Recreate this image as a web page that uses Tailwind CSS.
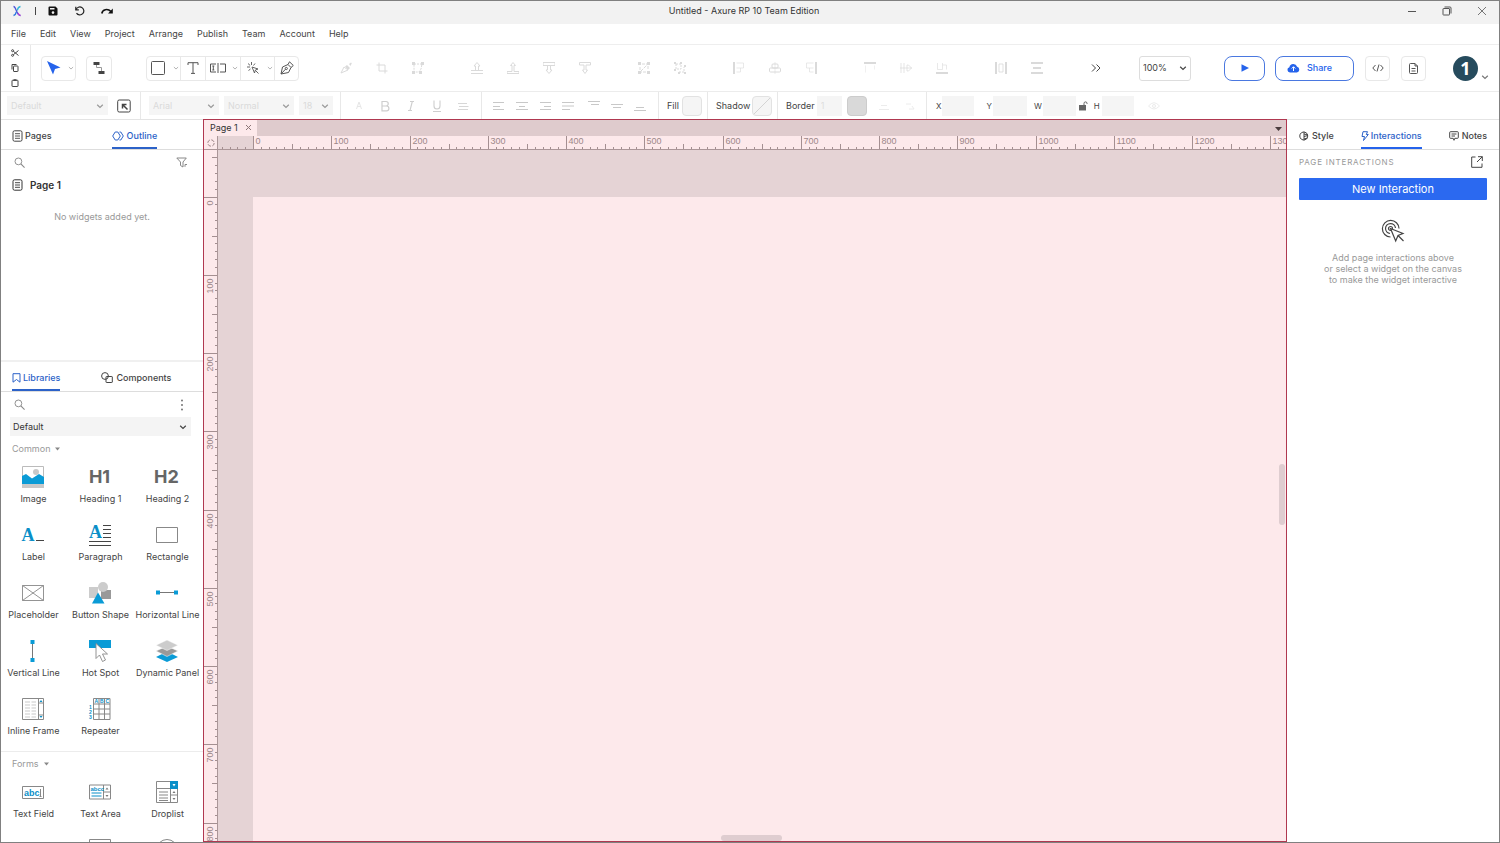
<!DOCTYPE html>
<html lang="en">
<head>
<meta charset="utf-8">
<meta name="viewport" content="width=device-width, initial-scale=1">
<title>Untitled - Axure RP 10 Team Edition</title>
<script src="https://cdn.jsdelivr.net/npm/@tailwindcss/browser@4"></script>
</head>
<body class="h-screen overflow-hidden bg-white font-['Inter','Liberation_Sans',sans-serif] text-[9px] leading-3 text-[#444]">
<svg class="hidden" aria-hidden="true">
  <symbol id="chev" viewBox="0 0 8 8"><path d="M1.2 2.7 4 5.4 6.800 2.700" fill="none" stroke="currentColor" stroke-width="1.2"/></symbol>
  <symbol id="page" viewBox="0 0 11 12"><rect x="1" y=".8" width="9" height="10.400" rx="1.500" fill="none" stroke="currentColor"/><path d="M3 3.700h5M3 6h5M3 8.300h5" stroke="currentColor" stroke-width=".9"/></symbol>
  <symbol id="search" viewBox="0 0 12 12"><circle cx="4.800" cy="4.800" r="3.700" fill="none" stroke="currentColor"/><path d="m7.500 7.500 4 4" stroke="currentColor" stroke-width="1.200"/></symbol>
</svg>
<div class="flex h-full flex-col border border-[#808080]">

  <header class="flex h-[23px] shrink-0 items-center justify-between bg-[#f2f2f2] pb-[3px]">
    <div class="flex flex-1 items-center">
      <svg class="ml-[10px] size-3" viewBox="0 0 12 12" fill="none" stroke-width="1.300"><path d="M2.500 1.500C5.500 1.500 5 10.500 9.500 10.500" stroke="#4a52d8"/><path d="M9.500 1.500C6.500 2 6.500 5 6.300 5.500" stroke="#35b6d8"/><path d="M5.300 7C5 8.500 4.500 10 2.500 10.500" stroke="#2c78e0"/><path d="M7 8c.5 1.500 1.200 2.500 2.500 2.500" stroke="#c040d0"/></svg>
      <span class="ml-3 h-2 w-px bg-[#444]"></span>
      <button class="ml-3 block" aria-label="Save"><svg class="size-[10px]" viewBox="0 0 10 10"><path d="M1.500.5h6L9.500 2.500v6a1 1 0 0 1-1 1h-7a1 1 0 0 1-1-1v-7a1 1 0 0 1 1-1Z" fill="#111"/><path d="M2 2h4.500v1.500H2z" fill="#f2f2f2"/><circle cx="5" cy="6.600" r="1.300" fill="#f2f2f2"/></svg></button>
      <button class="ml-[17px] block" aria-label="Undo"><svg class="size-[10px]" viewBox="0 0 10 10" fill="none" stroke="#222" stroke-width="1.200"><path d="M.8.800v3h3"/><path d="M1 3.800A4 4 0 1 1 1.500 7.200"/></svg></button>
      <button class="ml-4 block" aria-label="Redo"><svg class="h-[10px] w-3" viewBox="0 0 12 10" fill="none" stroke="#111" stroke-width="1.600"><path d="M.8 7.500C1.500 3.500 6.500 2 10 5.500"/><path d="M11.800 2.500v5H7z" fill="#111" stroke="none"/></svg></button>
    </div>
    <h1 class="text-[9px] text-[#333]">Untitled - Axure RP 10 Team Edition</h1>
    <div class="flex flex-1 items-center justify-end gap-[25px] pr-3 text-[#555]">
      <button aria-label="Minimize"><svg class="size-[10px]" viewBox="0 0 10 10"><path d="M1 5.500h8" stroke="currentColor"/></svg></button>
      <button aria-label="Restore"><svg class="size-[10px]" viewBox="0 0 10 10" fill="none" stroke="currentColor"><rect x="1" y="2.500" width="6.500" height="6.500" rx=".5"/><path d="M2.500 1h5.500a1 1 0 0 1 1 1v5.500"/></svg></button>
      <button aria-label="Close"><svg class="size-[10px]" viewBox="0 0 10 10"><path d="m1 1 8 8M9 1 1 9" stroke="currentColor" stroke-width=".8"/></svg></button>
    </div>
  </header>

  <nav class="flex h-[21px] shrink-0 items-center gap-[14px] border-b border-[#eee] pl-[10px]">
    <button>File</button><button>Edit</button><button>View</button><button>Project</button><button>Arrange</button><button>Publish</button><button>Team</button><button>Account</button><button>Help</button>
  </nav>

  <div class="flex h-[47px] shrink-0 items-center border-b border-[#ececec]">
    <div class="flex h-full w-[30px] shrink-0 flex-col items-center justify-around border-r border-[#e8e8e8] pr-[2px]">
      <button aria-label="Cut"><svg class="size-2" viewBox="0 0 8 8" fill="none" stroke="#444"><circle cx="1.600" cy="1.700" r="1"/><circle cx="1.600" cy="6.300" r="1"/><path d="M2.400 2.300 7.500 6.500M2.400 5.700 7.500 1.500"/></svg></button>
      <button aria-label="Copy"><svg class="size-2" viewBox="0 0 8 8" fill="none" stroke="#444"><rect x="2.500" y="2" width="4.500" height="5.500" rx=".5"/><path d="M1 5.500V.5h4.500"/></svg></button>
      <button aria-label="Paste"><svg class="size-2" viewBox="0 0 8 8" fill="none" stroke="#444"><rect x="1" y="1.300" width="6" height="6.200" rx=".5"/><path d="M2.500 1h3" stroke-width="1.500"/></svg></button>
    </div>
    <button class="ml-[10px] flex h-[25px] w-[35px] shrink-0 items-center justify-between rounded border border-[#e8e8e8] pr-px pl-[5px]" aria-label="Select tool"><svg class="size-[14px]" viewBox="0 0 14 14"><path d="M0 0 13.500 6.500 8 8 6 13.500z" fill="#2563eb"/></svg><svg class="size-[6px] text-[#aaa]"><use href="#chev"/></svg></button>
    <button class="ml-[10px] flex h-[25px] w-[26px] shrink-0 items-center justify-center rounded border border-[#e8e8e8]" aria-label="Connector"><svg class="h-[14px] w-3" viewBox="0 0 12 14"><path d="M.5 1h6v3h-6zM5.500 10h6v3h-6z" fill="#444"/><path d="M3.500 4v2.500h5V10" fill="none" stroke="#999"/></svg></button>
    <div class="ml-[34px] flex h-[25px] w-[153px] shrink-0 divide-x divide-[#e8e8e8] rounded border border-[#e8e8e8] text-[#555]">
      <button class="flex w-[34px] items-center justify-between pr-px pl-1" aria-label="Rectangle tool"><svg class="size-[14px]" viewBox="0 0 14 14"><rect x=".5" y=".5" width="13" height="13" rx="1" fill="none" stroke="currentColor"/></svg><svg class="size-[6px] text-[#aaa]"><use href="#chev"/></svg></button>
      <button class="flex w-[25px] items-center justify-center" aria-label="Text tool"><svg class="size-3" viewBox="0 0 12 12" fill="none" stroke="currentColor"><path d="M1 3V.700h10V3M6 .700v10.800M4 11.400h4"/></svg></button>
      <button class="flex w-[35px] items-center justify-between pr-[2px] pl-1" aria-label="Form tool"><svg class="h-[10px] w-4" viewBox="0 0 16 10" fill="none" stroke="currentColor"><path d="M6 1H.500v8H6M10 1h5.500v8H10M8 0v10M3.300 3v4M2.300 3h2M2.300 7h2"/></svg><svg class="size-[6px] text-[#aaa]"><use href="#chev"/></svg></button>
      <button class="flex w-[34px] items-center justify-between pr-px pl-[5px]" aria-label="Hot spot tool"><svg class="size-[14px]" viewBox="0 0 14 14" fill="none" stroke="currentColor" stroke-width=".9"><path d="m6 6 6 2-2.600 1L8.500 12zM9.500 9.500l3 3M5.500 1v3M1 6h3M2 2.500 4.200 4.500M9 2.500 7.500 4.500M2.500 9.500 4.500 8"/></svg><svg class="size-[6px] text-[#aaa]"><use href="#chev"/></svg></button>
      <button class="flex flex-1 items-center justify-center" aria-label="Pen tool"><svg class="size-[14px]" viewBox="0 0 14 14" fill="none" stroke="currentColor"><path d="M1 13 2.500 6 8 3.500 11 6.500 8.500 11.500zM8 3.500 9.500.8l3.800 3.700L11 6.500M1 13l4.500-4.800"/><circle cx="6.300" cy="7.500" r="1.100"/></svg></button>
    </div>

    <div class="ml-7 flex min-w-0 flex-1 items-center gap-[23px] overflow-hidden pl-px text-[#dadada] [&_button]:flex [&_button]:w-9 [&_button]:justify-center [&_svg]:size-3">
      <div class="flex">
        <button disabled aria-label="Format painter"><svg viewBox="0 0 12 12"><path d="M1 11 4 5l4 3z" fill="none" stroke="currentColor"/><path d="M5 4.500 7 3l3 3-2 2zM9 2l2-1.500.8.800L10.500 4z" fill="currentColor"/></svg></button>
        <button disabled aria-label="Crop"><svg viewBox="0 0 12 12" fill="none" stroke="currentColor"><path d="M3 .5V9h8.500M.5 3H9v8.500"/></svg></button>
        <button disabled aria-label="Transform"><svg viewBox="0 0 12 12" fill="none" stroke="currentColor"><path d="M2 2h8L9 7l-2 3H2z" stroke-dasharray="2 1"/><path d="M0 1.500h3M0 10.500h3M9 1.500h3M7 10.500h3" stroke-width="3"/></svg></button>
      </div>
      <div class="flex">
        <button disabled aria-label="Bring to front"><svg viewBox="0 0 12 12" fill="none" stroke="currentColor"><path d="M0 11.500h12M0 8.500h12M4.500 8.500V4H3l3-3.500L9 4H7.500v4.500"/></svg></button>
        <button disabled aria-label="Bring forward"><svg viewBox="0 0 12 12" fill="none" stroke="currentColor"><path d="M0 11.500h12M0 11.500V9.500h5V3.500H3.500L6 .500l2.500 3H7v6h5v2"/></svg></button>
        <button disabled aria-label="Send backward"><svg viewBox="0 0 12 12" fill="none" stroke="currentColor"><path d="M0 .5h12M0 3.500h12M4.500 3.500V8H3l3 3.500L9 8H7.500V3.500M0 .5v3M12 .5v3"/></svg></button>
        <button disabled aria-label="Send to back"><svg viewBox="0 0 12 12" fill="none" stroke="currentColor"><path d="M.5.500h11V3H7v5h1.500L6 11.500 3.500 8H5V3H.5z"/></svg></button>
      </div>
      <div class="flex">
        <button disabled aria-label="Group"><svg viewBox="0 0 12 12" fill="none" stroke="currentColor"><path d="M2 5v5h6M4 2h6v6M3 9l6-6" stroke-dasharray="3 1"/><path d="M0 1.500h3M0 10.500h3M9 1.500h3M9 10.500h3" stroke-width="3"/></svg></button>
        <button disabled aria-label="Ungroup"><svg viewBox="0 0 12 12" fill="none" stroke="currentColor"><path d="M2 2h5v5H2zM5 10h5V5" stroke-dasharray="2 1"/><path d="M0 1h2M6 1h2M0 8h2M10 4h2M4 11h2M10 11h2" stroke-width="2"/></svg></button>
      </div>
      <div class="flex">
        <button disabled aria-label="Align left"><svg viewBox="0 0 12 12" fill="none" stroke="currentColor"><path d="M1 0v12" stroke-width="2"/><path d="M3.500 1h7v5h-7M3.500 10h4V6" opacity=".6"/></svg></button>
        <button disabled aria-label="Align center"><svg viewBox="0 0 12 12" fill="none" stroke="currentColor"><rect x="3" y="2" width="6" height="4" rx="1"/><rect x=".5" y="6" width="11" height="4" rx="1"/><path d="M6 0v12" opacity=".5"/></svg></button>
        <button disabled aria-label="Align right"><svg viewBox="0 0 12 12" fill="none" stroke="currentColor"><path d="M11 0v12" stroke-width="2"/><path d="M8.500 1h-7v5h7M8.500 10h-4V6" opacity=".6"/></svg></button>
      </div>
      <div class="flex">
        <button disabled aria-label="Align top"><svg viewBox="0 0 12 12" fill="none" stroke="currentColor"><path d="M0 1h12" stroke-width="2"/><path d="M1.500 3.500v7M10.500 3.500v4" opacity=".4"/></svg></button>
        <button disabled aria-label="Align middle"><svg viewBox="0 0 12 12" fill="none" stroke="currentColor"><path d="M1 1v10M4 1v10" opacity=".7"/><path d="M7 3h1.500l3 3-3 3H7zM0 6h12" opacity=".7"/></svg></button>
        <button disabled aria-label="Align bottom"><svg viewBox="0 0 12 12" fill="none" stroke="currentColor"><path d="M0 11h12" stroke-width="2"/><path d="M1.500 1v6.500h5V1M6.500 3h4v4.500" opacity=".6"/></svg></button>
      </div>
      <div class="flex">
        <button disabled aria-label="Distribute horizontally"><svg viewBox="0 0 12 12" fill="none" stroke="currentColor"><path d="M1 0v12M11 0v12" stroke-width="2"/><path d="M4 2h4v8H4z" opacity=".8"/></svg></button>
        <button disabled aria-label="Distribute vertically"><svg viewBox="0 0 12 12" fill="none" stroke="currentColor"><path d="M0 1h12M0 11h12" stroke-width="2"/><path d="M2 6h8" stroke-width="2"/></svg></button>
      </div>
      <button class="text-[#444]" aria-label="More"><svg viewBox="0 0 12 12" fill="none" stroke="currentColor" stroke-width="1"><path d="m2 2.500 3.500 3.500L2 9.500M6.500 2.500 10 6 6.500 9.500"/></svg></button>
    </div>

    <div class="relative h-[25px] w-[52px] shrink-0">
      <select aria-label="Zoom" class="h-full w-full appearance-none rounded-[3px] border border-[#ddd] pl-[3px] text-[9px]"><option>100%</option></select>
      <svg class="pointer-events-none absolute top-2 right-1 size-2"><use href="#chev"/></svg>
    </div>
    <button class="ml-[33px] flex h-[25px] w-[41px] shrink-0 items-center justify-center rounded-lg border border-[#4a78e0]" aria-label="Preview"><svg class="size-2" viewBox="0 0 8 8"><path d="M.5.200 8 4 .5 7.800z" fill="#2563eb"/></svg></button>
    <button class="ml-[10px] flex h-[25px] w-[79px] shrink-0 items-center rounded-lg border border-[#4a78e0] pl-[11px] text-[#2563eb]"><svg class="h-[10px] w-[13px]" viewBox="0 0 13 10"><path d="M3 9.500a2.700 2.700 0 0 1-.6-5.300 4 4 0 0 1 7.700-.5A3 3 0 0 1 10 9.500z" fill="#2563eb"/><path d="M6.500 8V4M4.700 5.500 6.500 3.700 8.300 5.500" fill="none" stroke="#fff"/></svg><span class="ml-[7px] text-[9px] font-medium">Share</span></button>
    <button class="ml-[11px] flex size-[25px] shrink-0 items-center justify-center rounded border border-[#e8e8e8]" aria-label="Inspect"><svg class="h-2 w-3" viewBox="0 0 12 8" fill="none" stroke="#555"><path d="M3.500 1 .8 4l2.700 3M8.500 1l2.700 3-2.700 3M7 .500 5 7.500"/></svg></button>
    <button class="ml-[11px] flex size-[25px] shrink-0 items-center justify-center rounded border border-[#e8e8e8]" aria-label="Documents"><svg class="h-[11px] w-[9px]" viewBox="0 0 9 11" fill="none" stroke="#555"><path d="M1.500.5H6L8.500 3v6.500a1 1 0 0 1-1 1h-6a1 1 0 0 1-1-1v-8a1 1 0 0 1 1-1ZM6 .500V3h2.500M2.500 5.500h4M2.500 8h4"/></svg></button>
    <button class="ml-[27px] flex shrink-0 items-end gap-[3px] pr-[10px]" aria-label="Account menu"><span class="flex size-[25px] items-center justify-center rounded-full bg-[#264b5d] font-['Open_Sans','Noto_Sans',sans-serif] text-[18px] font-bold text-white">1</span><svg class="size-2 text-[#777]"><use href="#chev"/></svg></button>
  </div>

  <div class="flex h-7 shrink-0 items-center overflow-hidden border-b border-[#e4e4e4] text-[#444] [&>div]:shrink-0">
    <div class="flex h-full w-[140px] items-center border-r border-[#e8e8e8] pl-[6px]">
      <div class="relative h-[19px] w-[101px]"><select disabled aria-label="Widget style" class="h-full w-full appearance-none bg-[#f5f5f5] pl-1 text-[9px] text-[#dadada] opacity-100"><option>Default</option></select><svg class="absolute top-[6px] right-1 size-2 text-[#999]"><use href="#chev"/></svg></div>
      <button class="ml-[9px]" aria-label="Manage styles"><svg class="size-[14px]" viewBox="0 0 14 14" fill="none" stroke="#444"><rect x=".7" y="1" width="12.500" height="12" rx="1.500"/><path d="M5.500 9.500v-4h4M5.500 5.500l5 5" stroke-width="1.500"/></svg></button>
    </div>
    <div class="flex h-full w-[200px] items-center gap-[5px] border-r border-[#e8e8e8] pl-2">
      <div class="relative h-[19px] w-[70px]"><select disabled aria-label="Font" class="h-full w-full appearance-none bg-[#f5f5f5] pl-1 text-[9px] text-[#dadada] opacity-100"><option>Arial</option></select><svg class="absolute top-[6px] right-1 size-2 text-[#999]"><use href="#chev"/></svg></div>
      <div class="relative h-[19px] w-[70px]"><select disabled aria-label="Font weight" class="h-full w-full appearance-none bg-[#f5f5f5] pl-1 text-[9px] text-[#dadada] opacity-100"><option>Normal</option></select><svg class="absolute top-[6px] right-1 size-2 text-[#999]"><use href="#chev"/></svg></div>
      <div class="relative h-[19px] w-[34px]"><select disabled aria-label="Font size" class="h-full w-full appearance-none bg-[#f5f5f5] pl-1 text-[9px] text-[#dadada] opacity-100"><option>18</option></select><svg class="absolute top-[6px] right-1 size-2 text-[#999]"><use href="#chev"/></svg></div>
    </div>
    <div class="flex h-full w-[141px] items-center justify-center border-r border-[#e8e8e8] text-[#cecece] [&>button]:flex [&>button]:w-[26px] [&>button]:justify-center [&_svg]:size-3">
      <button disabled aria-label="Text color"><svg viewBox="0 0 12 12" fill="none" stroke="currentColor" opacity=".5"><path d="M3.500 9 6 2l2.500 7M4.300 6.500h3.500"/></svg></button>
      <button disabled aria-label="Bold"><svg viewBox="0 0 12 12" fill="none" stroke="currentColor" stroke-width="1.200"><path d="M3 1.500h4a2.200 2.200 0 0 1 0 4.500H3zM3 6h4.500a2.300 2.300 0 0 1 0 4.800H3z"/></svg></button>
      <button disabled aria-label="Italic"><svg viewBox="0 0 12 12" fill="none" stroke="currentColor" stroke-width="1.100"><path d="M5 1.500h4M3 10.500h4M7.300 1.500 5 10.500"/></svg></button>
      <button disabled aria-label="Underline"><svg viewBox="0 0 12 12" fill="none" stroke="currentColor" stroke-width="1.100"><path d="M3 .500v5.500a3 3 0 0 0 6 0V.500M2 11.500h8"/></svg></button>
      <button disabled aria-label="List"><svg viewBox="0 0 12 12" stroke="currentColor"><path d="M1 3.500H10M2 6.500h9.500M1 9.500H11" opacity=".8"/></svg></button>
    </div>
    <div class="flex h-full w-[177px] items-center border-r border-[#e8e8e8] pl-[5px] text-[#c8c8c8] [&>button]:flex [&>button]:w-[23px] [&>button]:justify-center [&_svg]:size-3">
      <button disabled aria-label="Text left"><svg viewBox="0 0 12 12" stroke="currentColor"><path d="M0 2.500h11M0 6.500h7M0 9.500h11"/></svg></button>
      <button disabled aria-label="Text center"><svg viewBox="0 0 12 12" stroke="currentColor"><path d="M0 2.500h12M3 6.500h6M0 9.500h12"/></svg></button>
      <button disabled aria-label="Text right"><svg viewBox="0 0 12 12" stroke="currentColor"><path d="M1 2.500h11M5 6.500h7M1 9.500h11"/></svg></button>
      <button disabled aria-label="Justify"><svg viewBox="0 0 12 12" stroke="currentColor"><path d="M0 2.500h12M0 6h12M0 9.500h8"/></svg></button>
      <button disabled class="ml-[3px]" aria-label="Top"><svg viewBox="0 0 12 12" stroke="currentColor"><path d="M0 1.500h12M3 4.500h8"/></svg></button>
      <button disabled aria-label="Middle"><svg viewBox="0 0 12 12" stroke="currentColor"><path d="M0 4.500h12M2 7.500h8"/></svg></button>
      <button disabled aria-label="Bottom"><svg viewBox="0 0 12 12" stroke="currentColor"><path d="M2 7.500h8M0 10.500h12"/></svg></button>
    </div>
    <div class="flex h-full w-[49px] items-center gap-[3px] border-r border-[#e8e8e8] pl-2"><span>Fill</span><button class="size-5 rounded border border-[#e2e2e2] bg-[#f5f5f5]" aria-label="Fill color"></button></div>
    <div class="flex h-full w-[70px] items-center gap-[2px] border-r border-[#e8e8e8] pl-2"><span>Shadow</span><button class="size-5 rounded border border-[#e2e2e2] bg-[#f5f5f5]" aria-label="Shadow"><svg viewBox="0 0 18 18"><path d="M1 17 17 1" stroke="#d4d4d4"/></svg></button></div>
    <div class="flex h-full w-[149px] items-center border-r border-[#e8e8e8] pl-2">
      <label for="bw">Border</label><input id="bw" disabled value="1" class="ml-[2px] h-5 w-[25px] bg-[#f5f5f5] pl-1 text-[9px] text-[#ddd]">
      <button class="ml-[5px] size-5 rounded border border-[#ccc] bg-[#d9d9d9]" aria-label="Border color"></button>
      <button disabled class="ml-[12px]" aria-label="Line style"><svg class="size-[10px]" viewBox="0 0 10 10" stroke="#ececec"><path d="M2 4.500h6M0 8.500h10"/></svg></button>
      <button disabled class="ml-4" aria-label="Arrow style"><svg class="size-[10px]" viewBox="0 0 10 10" fill="none" stroke="#ececec"><path d="M1 3h5M4 8h5M7 5l2 3"/></svg></button>
    </div>
    <div class="flex h-full items-center pl-[9px] text-[8px] [&>input]:h-5 [&>input]:bg-[#f5f5f5]">
      <label for="px">X</label><input id="px" disabled class="ml-px w-8">
      <label for="py" class="ml-3">Y</label><input id="py" disabled class="ml-px w-[34px]">
      <label for="pw" class="ml-[7px]">W</label><input id="pw" disabled class="ml-px w-[33px]">
      <button class="ml-[2px]" aria-label="Lock ratio"><svg class="size-[10px]" viewBox="0 0 10 10"><path d="M1 4h7v5.500H1z" fill="#666"/><path d="M6 4V2.500A1.500 1.500 0 0 1 9 2.300V3" fill="none" stroke="#666"/></svg></button>
      <label for="ph" class="ml-[6px]">H</label><input id="ph" disabled class="ml-[2px] w-8">
      <button disabled class="ml-[14px]" aria-label="Visibility"><svg class="h-2 w-3" viewBox="0 0 12 8" fill="none" stroke="#ececec"><path d="M.5 4Q6-2.500 11.500 4 6 10 .5 4Z"/><circle cx="6" cy="4" r="1.500"/></svg></button>
    </div>
  </div>

  <main class="flex min-h-0 flex-1">
    <aside class="flex w-[202px] shrink-0 flex-col">
      <section class="flex h-[242px] shrink-0 flex-col border-b-2 border-[#f0f0f0]">
        <div class="flex h-[30px] shrink-0 gap-[60px] border-b border-[#ddd] pl-[11px] text-[9px] font-medium">
          <button class="flex items-center gap-[2px] pt-[2px]"><svg class="h-3 w-[11px]"><use href="#page"/></svg>Pages</button>
          <button class="flex items-center gap-[3px] border-b-2 border-[#2c62c8] pt-1 text-[#2c62c8]"><svg class="h-[10px] w-3" viewBox="0 0 12 10" fill="none" stroke="currentColor"><path d="M3.200 1h2.600L8.300 5 5.800 9H3.200L.7 5z"/><path d="M7.500 1h1.300l2.500 4-2.500 4H7.500"/></svg>Outline</button>
        </div>
        <div class="flex h-[25px] items-center justify-between pr-[15px] pl-[13px] text-[#888]">
          <button aria-label="Search outline"><svg class="size-[11px]"><use href="#search"/></svg></button>
          <button aria-label="Filter"><svg class="h-[11px] w-3" viewBox="0 0 12 11" fill="none" stroke="currentColor"><path d="M.8 1h9.500L7 5v5L4.500 8.500V5zM9 9.800V7.500h2"/></svg></button>
        </div>
        <button class="flex h-5 items-center gap-[7px] pl-[11px] text-[10px] font-semibold text-[#333]"><svg class="h-3 w-[11px]"><use href="#page"/></svg>Page 1</button>
        <p class="mt-4 text-center text-[#999]">No widgets added yet.</p>
      </section>
      <section class="flex min-h-0 flex-1 flex-col overflow-hidden">
        <div class="flex h-[30px] shrink-0 gap-[41px] border-b border-[#ddd] pl-[11px] text-[9px] font-medium">
          <button class="flex items-center gap-[2px] border-b-2 border-[#2c62c8] pt-1 text-[#2c62c8]"><svg class="h-[10px] w-[9px]" viewBox="0 0 9 10" fill="none" stroke="currentColor"><path d="M1 .700h7v8.500L4.500 6.500 1 9.200z"/></svg>Libraries</button>
          <button class="flex items-center gap-[3px] pt-[2px]"><svg class="h-[11px] w-3" viewBox="0 0 12 11" fill="none" stroke="currentColor"><circle cx="4" cy="4" r="3.400"/><rect x="5" y="4.500" width="6.300" height="6" rx=".5"/></svg>Components</button>
        </div>
        <div class="flex h-[25px] shrink-0 items-center justify-between pr-[19px] pl-[13px] text-[#888]">
          <button aria-label="Search libraries"><svg class="size-[11px]"><use href="#search"/></svg></button>
          <button aria-label="Library options"><svg class="h-3 w-1" viewBox="0 0 4 12" fill="#666"><circle cx="2" cy="1.500" r=".9"/><circle cx="2" cy="6" r=".9"/><circle cx="2" cy="10.500" r=".9"/></svg></button>
        </div>
        <div class="relative mr-3 ml-[9px] h-[19px] shrink-0">
          <select aria-label="Library" class="h-full w-full appearance-none bg-[#f4f4f4] pl-[3px] text-[9px] text-[#333]"><option>Default</option></select>
          <svg class="pointer-events-none absolute top-[6px] right-1 size-2"><use href="#chev"/></svg>
        </div>
        <button class="flex h-[25px] shrink-0 items-center gap-[5px] pl-[11px] text-[#999]">Common<svg class="h-1 w-[5px]" viewBox="0 0 5 4"><path d="M0 .500h5L2.500 3.500z" fill="#888"/></svg></button>
        <div class="-ml-px grid w-[201px] shrink-0 grid-cols-3 [&>button]:flex [&>button]:h-[58px] [&>button]:flex-col [&>button]:items-center [&>button]:whitespace-nowrap [&_i]:flex [&_i]:h-8 [&_i]:items-center [&_i]:pr-[2px] [&_i]:not-italic [&_svg]:size-[22px] [&_svg]:overflow-visible">
          <button><i><svg viewBox="0 0 22 22"><path d="M.5.500h21v21H.5z" fill="#fff" stroke="#bbb"/><circle cx="14" cy="6" r="3" fill="#c8c8c8"/><path d="M0 10l4-2 6 4.500 7-4.500 5 3v7H0z" fill="#0a9bd6"/><path d="M0 18h22v4H0z" fill="#c8c8c8"/></svg></i>Image</button>
          <button><i class="text-[18px] font-bold text-[#666]">H1</i>Heading 1</button>
          <button><i class="text-[18px] font-bold text-[#666]">H2</i>Heading 2</button>
          <button><i class="gap-px font-['Liberation_Serif',serif] text-[18px] font-bold text-[#0a8fc8]">A<b class="mt-[10px] h-px w-2 bg-[#444]"></b></i>Label</button>
          <button><i><svg viewBox="0 0 22 22"><text x="0" y="14" font-family="Liberation Serif, serif" font-weight="700" font-size="18" fill="#0a8fc8">A</text><path d="M14 1.500h8M14 5.500h8M14 9.500h8M14 13.500h8M0 17.500h22M0 21.500h22" stroke="#444" stroke-width="1.200"/></svg></i>Paragraph</button>
          <button><i><svg viewBox="0 0 22 22"><path d="M.5 3.500h21v15H.5z" fill="none" stroke="#888"/></svg></i>Rectangle</button>
          <button><i><svg viewBox="0 0 22 22"><path d="M.5 3.500h21v15H.5zl21 15M.5 18.500l21-15" fill="none" stroke="#888" stroke-width=".9"/></svg></i>Placeholder</button>
          <button><i><svg viewBox="0 0 22 22"><path d="M0 5h9v11H0z" fill="#ccc"/><path d="M12 8h10v9H12z" fill="#999"/><circle cx="14" cy="5" r="5" fill="#ccc"/><path d="M9 10.500 15.500 21.500H3z" fill="#0a9bd6"/></svg></i>Button Shape</button>
          <button><i><svg viewBox="0 0 22 22"><path d="M2 10.500h18" stroke="#777"/><path d="M0 8.500h4v4H0zM18 8.500h4v4h-4z" fill="#0a9bd6"/></svg></i>Horizontal Line</button>
          <button><i><svg viewBox="0 0 22 22"><path d="M10.500 2v18" stroke="#777"/><path d="M8.500 0h4v4h-4zM8.500 18h4v4h-4z" fill="#0a9bd6"/></svg></i>Vertical Line</button>
          <button><i><svg viewBox="0 0 22 22"><path d="M0 0h22v8H0z" fill="#0a9bd6"/><path d="M7 3.500v15l3.500-3.500 3 6.500 3-1.500-3-6h5z" fill="#fff" stroke="#888" stroke-width=".9"/></svg></i>Hot Spot</button>
          <button><i><svg viewBox="0 0 22 22"><path d="M11 11.500 22 17l-11 5-11-5z" fill="#0a9bd6"/><path d="M11 6 22 11l-11 5.500L0 11z" fill="#999" stroke="#fff" stroke-width=".5"/><path d="M11 0 22 5.200 11 10.500 0 5.200z" fill="#ccc" stroke="#fff" stroke-width=".5"/></svg></i>Dynamic Panel</button>
          <button><i><svg viewBox="0 0 22 22" fill="none" stroke="#888"><path d="M.5.500h21v21H.5zM16.500.500v21M16.500 5h5M16.500 17h5"/><path d="M3 4h5M9.500 4H14M3 7h5M9.500 7H14M3 10h5M9.500 10H14M3 13h5M9.500 13H14M3 16h5M9.500 16H14M3 19h5M9.500 19H14" stroke="#bbb" stroke-width=".8"/><path d="M17.500 4 19 2l1.500 2zM17.500 18l1.500 2 1.500-2z" fill="#0a8fc8" stroke="none"/></svg></i>Inline Frame</button>
          <button><i><svg viewBox="0 0 22 22" fill="none" stroke="#888"><path d="M4.500.500h16.500v21H4.500zM4.500 6h16.500M4.500 11h16.500M4.500 16h16.500M10 .500v21M15.500.500v21"/><g font-family="Liberation Sans" font-weight="700" font-size="5" fill="#0a8fc8" stroke="none"><text x="5.500" y="5">A</text><text x="11" y="5">B</text><text x="16.500" y="5">C</text><text x="0" y="11">1</text><text x="0" y="16">2</text><text x="0" y="21">3</text></g></svg></i>Repeater</button>
        </div>
        <button class="flex h-[25px] shrink-0 items-center gap-[5px] border-t border-[#ececec] pl-[11px] text-[#999]">Forms<svg class="h-1 w-[5px]" viewBox="0 0 5 4"><path d="M0 .500h5L2.500 3.500z" fill="#888"/></svg></button>
        <div class="-ml-px grid w-[201px] shrink-0 grid-cols-3 [&>button]:flex [&>button]:h-[58px] [&>button]:flex-col [&>button]:items-center [&>button]:whitespace-nowrap [&_i]:flex [&_i]:h-8 [&_i]:items-center [&_i]:pr-[2px] [&_i]:not-italic [&_svg]:size-[22px] [&_svg]:overflow-visible">
          <button><i><svg viewBox="0 0 22 22"><path d="M.5 5.500h21v12H.5zM18.500 8v7.500M17.500 15.500h2" fill="none" stroke="#888"/><text x="2" y="15" font-family="Liberation Sans" font-weight="700" font-size="9" fill="#0a8fc8">abc</text></svg></i>Text Field</button>
          <button><i><svg viewBox="0 0 22 22"><path d="M.5 4h21v14H.5zM14.500 4v14M14.500 11h7" fill="none" stroke="#888"/><path d="M16.500 8.500 18 6.500l1.500 2zM16.500 14l1.500 2 1.500-2z" fill="#777"/><text x="1.500" y="9.500" font-family="Liberation Sans" font-weight="700" font-size="6" fill="#0a8fc8">abcc</text><path d="M2.500 12h10M2.500 15h10" stroke="#0a8fc8"/></svg></i>Text Area</button>
          <button><i><svg viewBox="0 0 22 22"><path d="M.5.500h21v7H.5zM.5 7.500h21v14H.5zM14.500.500v21M14.500 14h7M3 11h9M3 14h9M3 17h9M3 19.500h9" fill="none" stroke="#888"/><path d="M14 0h8v8h-8z" fill="#0a8fc8"/><path d="M16.500 3 18 5.500 19.500 3z" fill="#fff"/><path d="M16.500 12 18 10l1.500 2zM16.500 17l1.500 2 1.500-2z" fill="#777"/></svg></i>Droplist</button>
          <button aria-label="List Box"><i><svg viewBox="0 0 22 22"><path d="M.5 6h21v10H.5z" fill="none" stroke="#888"/></svg></i></button>
          <button aria-label="Checkbox"><i><svg viewBox="0 0 22 22"><path d="M.5.500h21v21H.5z" fill="none" stroke="#888"/></svg></i></button>
          <button aria-label="Radio Button"><i><svg viewBox="0 0 22 22"><circle cx="11" cy="11" r="10.500" fill="none" stroke="#888"/></svg></i></button>
        </div>
      </section>
    </aside>

    <section class="-mt-px flex min-w-0 flex-1 flex-col border border-[#b03850] bg-[#fde9eb]" aria-label="Canvas">
      <div class="flex h-4 shrink-0 items-center justify-between bg-[#dfcbcd] pr-1">
        <button class="flex h-full w-[53px] items-center justify-between bg-[#fde9eb] pr-[6px] pb-px pl-[6px] text-[#333]">Page 1<svg class="size-[5px]" viewBox="0 0 5 5"><path d="m0 0 5 5M5 0 0 5" stroke="#8d7779"/></svg></button>
        <button class="pt-px" aria-label="Page list"><svg class="h-1 w-[7px]" viewBox="0 0 7 4"><path d="M0 0h7L3.500 4z" fill="#4a3c3e"/></svg></button>
      </div>
      <div class="flex h-[14px] shrink-0 border-b border-[#ab9698]">
        <div class="flex w-[14px] shrink-0 items-center justify-center border-r border-[#ab9698]"><svg class="size-2" viewBox="0 0 8 8" fill="none" stroke="#9c8587"><circle cx="4" cy="4" r="3.200" stroke-dasharray="3.500 1.500"/></svg></div>
        <div class="min-w-0 flex-1 bg-linear-to-r from-[#e5d3d5] from-[36px] to-[#fde9eb] to-[36px]"><svg id="rx" class="block h-[13px] w-full" font-family="Liberation Sans, sans-serif" font-size="9" fill="#9c8789"></svg></div>
      </div>
      <div class="flex min-h-0 flex-1">
        <div class="w-[14px] shrink-0 border-r border-[#ab9698]"><svg id="ry" class="block h-full w-[13px]" font-family="Liberation Sans, sans-serif" font-size="9" fill="#9c8789"></svg></div>
        <div class="relative flex min-w-0 flex-1 bg-[#e5d3d5] pt-[47px] pl-[35px]">
          <div class="flex-1 bg-[#fde9eb]"></div>
          <div class="absolute right-px bottom-[316px] h-[61px] w-[6px] rounded-sm bg-[#dfcdd0]"></div>
          <div class="absolute bottom-0 left-[503px] h-[6px] w-[61px] rounded-sm bg-[#dfcdd0]"></div>
        </div>
      </div>
    </section>

    <aside class="flex w-[212px] shrink-0 flex-col">
      <div class="flex h-[30px] shrink-0 justify-between border-b border-[#ddd] pr-3 pl-3 text-[9px] font-medium">
        <button class="flex items-center gap-[3px] pt-[2px]"><svg class="size-[10px]" viewBox="0 0 10 10" fill="none" stroke="currentColor"><path d="M6 1.200a4 4 0 1 0 0 7.600M5 .800v8.500M5 3l4 1M5 5.500l4-1M5 8l3.500-1M6 1.200a4 4 0 0 1 0 7.600"/></svg>Style</button>
        <button class="flex items-center gap-[2px] border-b-2 border-[#2563eb] pt-1 text-[#2c62c8]"><svg class="h-[10px] w-2" viewBox="0 0 8 10" fill="none" stroke="currentColor"><path d="M2 .700h4.500L5.300 3.500h2L2.500 9.500 3.500 5.500H1z"/></svg>Interactions</button>
        <button class="flex items-center gap-[3px] pt-[2px]"><svg class="size-[10px]" viewBox="0 0 10 10" fill="none" stroke="currentColor"><path d="M1.500.700h7a.8.800 0 0 1 .8.800v5a.8.800 0 0 1-.8.800H5.800L5 9.300 4.200 7.300H1.500a.8.800 0 0 1-.8-.8v-5a.8.800 0 0 1 .8-.8ZM2.500 3h5M2.500 5h3.500"/></svg>Notes</button>
      </div>
      <div class="flex h-6 shrink-0 items-center justify-between pr-4 pl-3">
        <h2 class="text-[8px] tracking-widest text-[#999]">PAGE INTERACTIONS</h2>
        <button aria-label="Open in window"><svg class="size-3" viewBox="0 0 12 12" fill="none" stroke="#444"><path d="M4.500 1H.700v10.300H11V7.500M7 .700h4.300V5M11.300.700 6 6"/></svg></button>
      </div>
      <button class="mx-3 mt-1 h-[22px] shrink-0 rounded-[1px] bg-[#2b69f0] text-[11px] text-white">New Interaction</button>
      <svg class="mt-[19px] h-6 w-6 shrink-0 self-center" viewBox="0 0 24 24" fill="none" stroke="#444" stroke-width="1.200"><path d="M9.500 18A8.300 8.300 0 1 1 18 9.500"/><path d="M9 14.500A5 5 0 1 1 14.500 9"/><circle cx="9.500" cy="9.500" r="2"/><path d="m9.500 9.500 12.500 5-5 2-2.300 5.500zM17.500 17l5 5" fill="#fff"/></svg>
      <p class="mt-[9px] text-center text-[9px] leading-[11px] text-[#999]">Add page interactions above<br>or select a widget on the canvas<br>to make the widget interactive</p>
    </aside>
  </main>
</div>
<script>
  // Draws ruler ticks: one per 10 units, longer at 50, full height with a number at 100.
  const STEP = 7.826;
  function drawRuler(id, origin, size, vertical) {
    let out = '';
    for (let i = -5; origin + i * STEP < size; i++) {
      const p = Math.floor(origin + i * STEP) + 0.5;
      if (p < 0) continue;
      const len = i % 10 === 0 ? 13 : i % 5 === 0 ? 5 : 2;
      out += vertical
        ? `<path d="M${13 - len} ${p}H13" stroke="#a48f91"/>`
        : `<path d="M${p} ${13 - len}V13" stroke="#a48f91"/>`;
      if (i % 10 === 0) {
        out += vertical
          ? `<text transform="translate(9 ${p + 3}) rotate(-90)" text-anchor="end">${i * 10}</text>`
          : `<text x="${p + 2}" y="8">${i * 10}</text>`;
      }
    }
    document.getElementById(id).innerHTML = out;
  }
  // The side panels take 432px of the width; the bars above the canvas take 152px of the height.
  function drawRulers() {
    drawRuler('rx', 35.5, window.innerWidth - 432, false);
    drawRuler('ry', 47, window.innerHeight - 152, true);
  }
  drawRulers();
  window.addEventListener('resize', drawRulers);
</script>
</body>
</html>
